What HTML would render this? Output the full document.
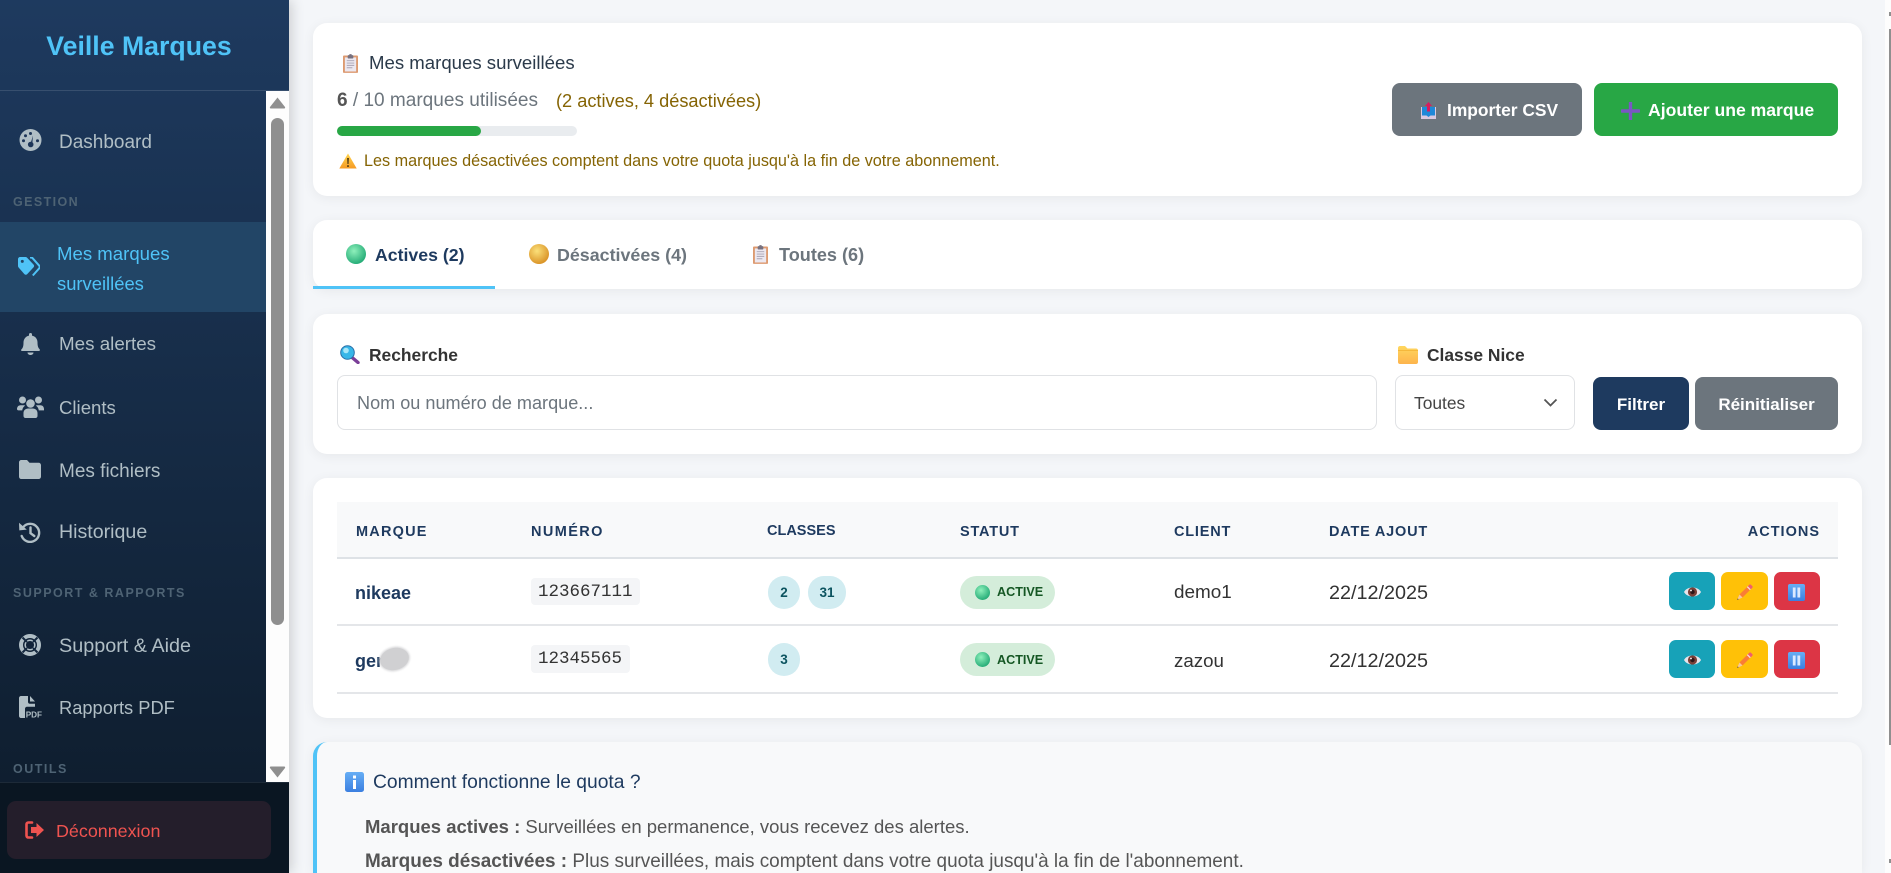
<!DOCTYPE html>
<html lang="fr"><head><meta charset="utf-8"><title>Mes marques surveillées</title>
<style>
*{box-sizing:border-box;margin:0;padding:0}
html,body{width:1891px;height:873px;overflow:hidden;background:#f4f6f9;font-family:"Liberation Sans",Arial,sans-serif}
body{position:relative}
.a,.t,svg.i{position:absolute}
.t{white-space:nowrap;line-height:24px;height:24px}
.card{position:absolute;left:313px;width:1549px;background:#fff;border-radius:14px;box-shadow:0 2px 12px rgba(0,0,0,.06)}
#side{position:absolute;left:0;top:0;width:289px;height:873px;background:linear-gradient(180deg,#1e3a5f 0%,#0d1b2a 100%);box-shadow:3px 0 12px rgba(0,0,0,.16)}
.m{color:#b0bec5;font-size:18.6px}
.s{color:#4e6374;font-size:12.5px;font-weight:700;letter-spacing:1.5px}
.btn{position:absolute;border-radius:8px}
.b{font-weight:700;color:#fff;font-size:17.4px}
.th{font-size:14.5px;font-weight:700;letter-spacing:.8px;color:#1e3a5f;top:520px}
.code{position:absolute;left:531px;height:27px;background:#f4f5f7;border-radius:4px;font:17.5px/29px "Liberation Mono",monospace;color:#333;padding-left:7px}
.bd{position:absolute;height:33px;background:#d1ecf1;color:#0c5460;border-radius:16px;font-size:13.5px;font-weight:700;line-height:33px;text-align:center}
.st{position:absolute;left:960px;width:95px;height:33px;background:#d4edda;border-radius:17px}
.ln{position:absolute;left:337px;width:1501px;height:2px;background:#e4e6e9}
.td{font-size:18.7px;color:#333}
.ab{position:absolute;width:46px;height:38px;border-radius:7px}
</style></head><body>
<svg width="0" height="0" style="position:absolute"><defs>
<radialGradient id="g1" cx=".4" cy=".35" r=".7"><stop offset="0" stop-color="#8ef0bb"/><stop offset="1" stop-color="#1fa873"/></radialGradient>
<radialGradient id="g2" cx=".4" cy=".35" r=".7"><stop offset="0" stop-color="#fbe07a"/><stop offset="1" stop-color="#d88f22"/></radialGradient>
<linearGradient id="g3" x1="0" y1="0" x2="0" y2="1"><stop offset="0" stop-color="#ffd54f"/><stop offset="1" stop-color="#f59a23"/></linearGradient>
<linearGradient id="g4" x1="0" y1="0" x2="0" y2="1"><stop offset="0" stop-color="#ffd75e"/><stop offset="1" stop-color="#fdb44d"/></linearGradient>
<linearGradient id="g5" x1="0" y1="0" x2="0" y2="1"><stop offset="0" stop-color="#66aef5"/><stop offset="1" stop-color="#3b7fe0"/></linearGradient>
<symbol id="clip" viewBox="0 0 16 20"><rect x="0" y="1.500" width="16" height="18.500" rx="1" fill="#dd9a70"/><rect x="2" y="3.500" width="12" height="15" fill="#ece8f0"/><path d="M4 7h8M4 9.500h8M4 12h8M4 14.500h6" stroke="#a9a4b4" stroke-width="1"/><rect x="5" y="1" width="6" height="3.600" rx=".8" fill="#77717f"/><rect x="6.800" y="0" width="2.400" height="2" fill="#77717f"/></symbol>
<symbol id="ball1" viewBox="0 0 20 20"><circle cx="10" cy="10" r="10" fill="url(#g1)"/></symbol>
<symbol id="ball2" viewBox="0 0 20 20"><circle cx="10" cy="10" r="10" fill="url(#g2)"/></symbol>
<symbol id="eye" viewBox="0 0 17 12"><path d="M0 6C3 0 14 0 17 6 14 12 3 12 0 6z" fill="#e9e4ea"/><circle cx="8.500" cy="6" r="4.600" fill="#7a4038"/><circle cx="8.500" cy="6" r="2.200" fill="#2d1518"/><circle cx="7" cy="4.500" r=".9" fill="#fff"/></symbol>
<symbol id="pen" viewBox="0 0 17 17"><path d="M3.500 10.500 11.800 2.200 14.800 5.200 6.500 13.500z" fill="#fa7d35"/><path d="M11.800 2.200 13.300.7c.5-.5 1.100-.5 1.600 0l1.400 1.400c.5.5.5 1.100 0 1.600L14.800 5.200z" fill="#ee5f6e"/><path d="M11.300 2.700 14.300 5.700" stroke="#f7dcdc" stroke-width="1.300"/><path d="M3.500 10.500 6.500 13.500 1 16z" fill="#f7c79c"/><path d="M1.700 14.400 1 16l1.800-.7z" fill="#5b4a3f"/></symbol>
<symbol id="pause" viewBox="0 0 17 17"><rect width="17" height="17" rx="2" fill="url(#g5)"/><rect x="4.800" y="3.500" width="2.800" height="10" fill="#dbe9ff"/><rect x="9.400" y="3.500" width="2.800" height="10" fill="#dbe9ff"/></symbol>
</defs></svg>

<!-- right page scrollbar -->
<div class="a" style="left:1885px;top:0;width:6px;height:873px;background:#fdfdfd"></div>
<div class="a" style="left:1889px;top:29px;width:2px;height:716px;background:#8f8f8f"></div>
<div class="a" style="left:1889px;top:12px;width:2px;height:4px;background:#8f8f8f"></div>
<div class="a" style="left:1889px;top:859px;width:2px;height:4px;background:#8f8f8f"></div>

<!-- card 1 -->
<div class="card" style="top:23px;height:173px"></div>
<svg class="i" style="left:343px;top:54px" width="15" height="19"><use href="#clip"/></svg>
<div class="t" style="left:369px;top:51px;font-size:18.6px;color:#2b3a4a">Mes marques surveillées</div>
<div class="t" style="left:337px;top:89px;font-size:19.05px;color:#6c757d"><b style="color:#555">6</b> / 10 marques utilisées</div>
<div class="t" style="left:556px;top:89px;font-size:18.2px;color:#856404">(2 actives, 4 désactivées)</div>
<div class="a" style="left:337px;top:126px;width:240px;height:10px;background:#e9ecef;border-radius:5px"><div style="width:144px;height:10px;background:#28a745;border-radius:5px"></div></div>
<svg class="i" style="left:339px;top:153px" width="18" height="16" viewBox="0 0 18 16"><path d="M9 .5 17.700 15.500H.3z" fill="url(#g3)"/><path d="M8.200 5h1.600l-.3 6h-1zM8.200 12.200h1.600v1.700H8.200z" fill="#3a2a10"/></svg>
<div class="t" style="left:364px;top:149px;font-size:16.2px;color:#856404">Les marques désactivées comptent dans votre quota jusqu'à la fin de votre abonnement.</div>
<div class="btn" style="left:1392px;top:83px;width:190px;height:53px;background:#6c757d"></div>
<svg class="i" style="left:1421px;top:102px" width="15" height="17" viewBox="0 0 15 17"><path d="M0 5h15v12H0z" fill="#d8c8e0"/><path d="M1 5h13v8.500H9.500L7.500 15l-2-1.500H1z" fill="#1e88d8"/><path d="M7.500 0 11 4H9v5.500H6V4H4z" fill="#d81b60"/></svg>
<div class="t b" style="left:1447px;top:98px">Importer CSV</div>
<div class="btn" style="left:1594px;top:83px;width:244px;height:53px;background:#28a745"></div>
<svg class="i" style="left:1621px;top:102px" width="19" height="18" viewBox="0 0 19 18"><path d="M9.500 1v16M1 9h17" stroke="#7a56c4" stroke-width="3.400" stroke-linecap="round"/></svg>
<div class="t b" style="left:1648px;top:98px;font-size:17.6px">Ajouter une marque</div>

<!-- tabs -->
<div class="card" style="top:220px;height:69px"><div class="a" style="left:0;top:66px;width:182px;height:3px;background:#4fc3f7"></div></div>
<svg class="i" style="left:346px;top:244px" width="20" height="20"><use href="#ball1"/></svg>
<div class="t" style="left:375px;top:243px;font-size:17.7px;font-weight:700;color:#1e3a5f">Actives (2)</div>
<svg class="i" style="left:529px;top:244px" width="20" height="20"><use href="#ball2"/></svg>
<div class="t" style="left:557px;top:243px;font-size:17.85px;font-weight:700;color:#6c757d">Désactivées (4)</div>
<svg class="i" style="left:753px;top:245px" width="15" height="19"><use href="#clip"/></svg>
<div class="t" style="left:779px;top:243px;font-size:18.1px;font-weight:700;color:#6c757d">Toutes (6)</div>

<!-- filters -->
<div class="card" style="top:314px;height:140px"></div>
<svg class="i" style="left:340px;top:345px" width="20" height="19" viewBox="0 0 20 19"><path d="M11.500 12 18 17.500" stroke="#7b3f98" stroke-width="3.400" stroke-linecap="round"/><circle cx="7.500" cy="7.500" r="6.800" fill="#38b6e8" stroke="#2a6fa8" stroke-width="1"/><circle cx="6" cy="5.500" r="2.800" fill="#a8e6f8"/></svg>
<div class="t" style="left:369px;top:343px;font-size:17.4px;font-weight:700;color:#333">Recherche</div>
<div class="a" style="left:337px;top:375px;width:1040px;height:55px;border:1px solid #e0e2e5;border-radius:8px;background:#fff"></div>
<div class="t" style="left:357px;top:391px;font-size:18.1px;color:#6c757d">Nom ou numéro de marque...</div>
<svg class="i" style="left:1398px;top:346px" width="20" height="18" viewBox="0 0 20 18"><path d="M0 2c0-1 .7-2 2-2h5l2.500 2.500H18c1.200 0 2 .8 2 2V16c0 1.200-.8 2-2 2H2c-1.200 0-2-.8-2-2z" fill="url(#g4)"/><path d="M0 4.500h20" stroke="#f5b83c" stroke-width="1"/></svg>
<div class="t" style="left:1427px;top:343px;font-size:17.4px;font-weight:700;color:#333">Classe Nice</div>
<div class="a" style="left:1395px;top:375px;width:180px;height:55px;border:1px solid #e0e2e5;border-radius:8px;background:#fff"></div>
<div class="t" style="left:1414px;top:391px;font-size:17.4px;color:#444">Toutes</div>
<svg class="i" style="left:1543px;top:398px" width="15" height="9" viewBox="0 0 15 9"><path d="M1.500 1.500 7.500 7.500 13.500 1.500" fill="none" stroke="#555" stroke-width="1.800"/></svg>
<div class="btn" style="left:1593px;top:377px;width:96px;height:53px;background:#1e3a5f"></div>
<div class="t b" style="left:1593px;width:96px;text-align:center;top:393px;font-size:17px">Filtrer</div>
<div class="btn" style="left:1695px;top:377px;width:143px;height:53px;background:#6c757d"></div>
<div class="t b" style="left:1695px;width:143px;text-align:center;top:393px;font-size:17px">Réinitialiser</div>

<!-- table -->
<div class="card" style="top:478px;height:240px"></div>
<div class="a" style="left:337px;top:502px;width:1501px;height:56px;background:#f8f9fa"></div>
<div class="ln" style="top:557px;background:#dee2e6"></div>
<div class="ln" style="top:624px"></div>
<div class="ln" style="top:692px"></div>
<div class="t th" style="left:356px;letter-spacing:1.2px">MARQUE</div>
<div class="t th" style="left:531px;letter-spacing:1.4px">NUMÉRO</div>
<div class="t th" style="left:767px;top:519px;letter-spacing:0">CLASSES</div>
<div class="t th" style="left:960px">STATUT</div>
<div class="t th" style="left:1174px">CLIENT</div>
<div class="t th" style="left:1329px">DATE AJOUT</div>
<div class="t th" style="right:71px;letter-spacing:1px">ACTIONS</div>

<div class="t" style="left:355px;top:581px;font-size:18px;font-weight:700;color:#1e3a5f">nikeae</div>
<div class="t" style="left:355px;top:649px;font-size:18px;font-weight:700;color:#1e3a5f">gen</div>
<div class="a" style="left:380px;top:648px;width:29px;height:22px;border-radius:50%;background:#d0d0d2;box-shadow:0 0 2px 1px #d6d6d8;transform:rotate(-14deg)"></div>
<div class="code" style="top:578px;width:109px">123667111</div>
<div class="code" style="top:645px;width:99px;height:28px">12345565</div>
<div class="bd" style="left:768px;top:576px;width:32px">2</div>
<div class="bd" style="left:808px;top:576px;width:38px">31</div>
<div class="bd" style="left:768px;top:643px;width:32px">3</div>
<div class="st" style="top:576px"></div><div class="st" style="top:643px"></div>
<svg class="i" style="left:975px;top:585px" width="15" height="15"><use href="#ball1"/></svg>
<svg class="i" style="left:975px;top:652px" width="15" height="15"><use href="#ball1"/></svg>
<div class="t" style="left:997px;top:580px;font-size:12.6px;font-weight:700;color:#155724">ACTIVE</div>
<div class="t" style="left:997px;top:648px;font-size:12.6px;font-weight:700;color:#155724">ACTIVE</div>
<div class="t td" style="left:1174px;top:581px;font-size:18.9px">demo1</div>
<div class="t td" style="left:1174px;top:649px">zazou</div>
<div class="t td" style="left:1329px;top:581px;font-size:19.8px">22/12/2025</div>
<div class="t td" style="left:1329px;top:649px;font-size:19.8px">22/12/2025</div>

<div class="ab" style="left:1669px;top:572px;background:#17a2b8"></div>
<div class="ab" style="left:1721px;top:572px;width:47px;background:#ffc107"></div>
<div class="ab" style="left:1774px;top:572px;background:#dc3545"></div>
<div class="ab" style="left:1669px;top:640px;background:#17a2b8"></div>
<div class="ab" style="left:1721px;top:640px;width:47px;background:#ffc107"></div>
<div class="ab" style="left:1774px;top:640px;background:#dc3545"></div>
<svg class="i" style="left:1684px;top:586px" width="17" height="12"><use href="#eye"/></svg>
<svg class="i" style="left:1736px;top:584px" width="17" height="17"><use href="#pen"/></svg>
<svg class="i" style="left:1788px;top:584px" width="17" height="17"><use href="#pause"/></svg>
<svg class="i" style="left:1684px;top:654px" width="17" height="12"><use href="#eye"/></svg>
<svg class="i" style="left:1736px;top:652px" width="17" height="17"><use href="#pen"/></svg>
<svg class="i" style="left:1788px;top:652px" width="17" height="17"><use href="#pause"/></svg>

<!-- info -->
<div class="card" style="top:742px;height:131px;background:#f8f9fa;border-left:4px solid #4fc3f7;border-radius:14px 14px 0 0"></div>
<svg class="i" style="left:345px;top:772px" width="19" height="20" viewBox="0 0 19 20"><rect width="19" height="20" rx="2.500" fill="url(#g5)"/><rect x="8" y="3.500" width="3" height="3" fill="#fff"/><rect x="8" y="8" width="3" height="9" fill="#fff"/></svg>
<div class="t" style="left:373px;top:771px;font-size:19.25px;color:#1e3a5f">Comment fonctionne le quota ?</div>
<div class="t" style="left:365px;top:815px;font-size:18.5px;color:#555"><b>Marques actives :</b> Surveillées en permanence, vous recevez des alertes.</div>
<div class="t" style="left:365px;top:850px;font-size:18.95px;color:#555"><b>Marques désactivées :</b> Plus surveillées, mais comptent dans votre quota jusqu'à la fin de l'abonnement.</div>

<!-- sidebar -->
<div id="side">
<div class="a" style="left:0;top:90px;width:289px;height:1px;background:rgba(255,255,255,.12)"></div>
<div class="t" style="left:0;width:278px;text-align:center;top:34px;font-size:26.7px;font-weight:700;color:#4fc3f7">Veille Marques</div>
<div class="a" style="left:0;top:222px;width:266px;height:90px;background:#224566"></div>

<svg class="i" style="left:19px;top:129px" width="23" height="22" viewBox="0 0 23 22"><circle cx="11.500" cy="11" r="11" fill="#b0bec5"/><path d="M10.500 18 14 6.500 13 18z" fill="#1e3658"/><circle cx="11.700" cy="15.500" r="2.800" fill="#1e3658"/><circle cx="11.500" cy="4.500" r="1.500" fill="#1e3658"/><circle cx="6.500" cy="6.800" r="1.500" fill="#1e3658"/><circle cx="4.500" cy="11.800" r="1.500" fill="#1e3658"/><circle cx="18.500" cy="11.800" r="1.500" fill="#1e3658"/></svg>
<div class="t m" style="left:59px;top:131px;font-size:19px">Dashboard</div>
<div class="t s" style="left:13px;top:190px;letter-spacing:1.4px">GESTION</div>

<svg class="i" style="left:18px;top:257px" width="22" height="20" viewBox="0 0 22 20"><path d="M0 2c0-1 1-2 2-2h5.500c.6 0 1.100.2 1.500.6l6.600 7c.7.7.7 1.900 0 2.600l-6.500 7c-.7.700-1.900.700-2.600 0L.6 10.500C.2 10 0 9.500 0 9z" fill="#4fc3f7"/><circle cx="4.300" cy="4.400" r="1.500" fill="#224566"/><path d="M12 .5h1c.7 0 1.100.2 1.500.6l6.500 7.300c.9 1 .9 2.300 0 3.200l-6.200 6.900" fill="none" stroke="#4fc3f7" stroke-width="2"/></svg>
<div class="t" style="left:57px;top:242px;font-size:18.6px;color:#4fc3f7">Mes marques</div>
<div class="t" style="left:57px;top:272px;font-size:18.4px;color:#4fc3f7">surveillées</div>

<svg class="i" style="left:21px;top:333px" width="19" height="22" viewBox="0 0 19 22"><path d="M8 1.500a1.500 1.500 0 0 1 3 0V2.600c3.400.7 5.500 3.400 5.500 6.800 0 4.600 1.100 5.800 2.100 6.800.5.500.4 1.800-.7 1.800H1.100C0 18.200-.1 16.900.4 16.400c1-1 2.100-2.200 2.100-6.800 0-3.400 2.100-6.300 5.500-7z" fill="#b0bec5"/><path d="M6.500 19.500h6c0 1.400-1.300 2.500-3 2.500s-3-1.100-3-2.500z" fill="#b0bec5"/></svg>
<div class="t m" style="left:59px;top:332px;font-size:18.8px">Mes alertes</div>

<svg class="i" style="left:17px;top:396px" width="27" height="22" viewBox="0 0 27 22"><g fill="#b0bec5"><circle cx="5.500" cy="4" r="3.500"/><circle cx="21.500" cy="4" r="3.500"/><circle cx="13.500" cy="7.500" r="4.300"/><path d="M0 13c0-2 1.300-3.800 3.500-3.800h3.300c.5 0 1 .2 1.400.4-1.700 1.100-2.800 2.800-3 4.800H1.500C.6 14.400 0 13.800 0 13zM27 13c0-2-1.300-3.800-3.500-3.800h-3.300c-.5 0-1 .2-1.400.4 1.700 1.100 2.800 2.800 3 4.800h4.700c.9 0 1.500-.6 1.500-1.400zM6.500 17c0-2.600 2.100-4.500 4.600-4.500h4.800c2.500 0 4.600 1.900 4.600 4.500v3c0 1-.8 2-2 2H8.500c-1.200 0-2-1-2-2z"/></g></svg>
<div class="t m" style="left:59px;top:396px">Clients</div>

<svg class="i" style="left:19px;top:460px" width="22" height="19" viewBox="0 0 22 19"><path d="M0 2.500C0 1 1 0 2.500 0H8l2.500 2.700h9c1.400 0 2.500 1 2.500 2.500v11.300c0 1.500-1.100 2.500-2.500 2.500h-17C1 19 0 18 0 16.500z" fill="#b0bec5"/></svg>
<div class="t m" style="left:59px;top:460px;font-size:19px">Mes fichiers</div>

<svg class="i" style="left:19px;top:522px" width="22" height="21" viewBox="0 0 22 21"><path d="M4.300 5a9 9 0 1 1-1.600 9" fill="none" stroke="#b0bec5" stroke-width="2.400" stroke-linecap="round"/><path d="M0 0.800 7.800 7.600 0.300 8.400z" fill="#b0bec5"/><path d="M11.500 5.500v5.700l3.800 2.800" fill="none" stroke="#b0bec5" stroke-width="2.400" stroke-linecap="round"/></svg>
<div class="t m" style="left:59px;top:520px;font-size:19.6px">Historique</div>

<div class="t s" style="left:13px;top:581px">SUPPORT &amp; RAPPORTS</div>

<svg class="i" style="left:19px;top:634px" width="22" height="22" viewBox="0 0 22 22"><circle cx="11" cy="11" r="9" fill="none" stroke="#b0bec5" stroke-width="4"/><circle cx="11" cy="11" r="4.800" fill="none" stroke="#b0bec5" stroke-width="1.500"/><path d="M3.500 3.500l4.500 4.500M18.500 3.500 14 8M3.500 18.500 8 14M18.500 18.500 14 14" stroke="#14283f" stroke-width="2"/></svg>
<div class="t m" style="left:59px;top:634px;font-size:19.8px">Support &amp; Aide</div>

<svg class="i" style="left:19px;top:696px" width="23" height="22" viewBox="0 0 23 22"><path d="M0 2C0 .9.900 0 2 0h7v6c0 1 .8 1.700 1.700 1.700H16v3H8c-1.200 0-2 .9-2 2V22H2c-1.100 0-2-.9-2-2z" fill="#b0bec5"/><path d="M11 0l5 5.500h-5z" fill="#b0bec5"/><text x="6.700" y="21.500" font-family="Liberation Sans,sans-serif" font-size="8.200" font-weight="700" fill="#b0bec5">PDF</text></svg>
<div class="t m" style="left:59px;top:696px;font-size:18.3px">Rapports PDF</div>

<div class="t s" style="left:13px;top:757px">OUTILS</div>

<!-- sidebar scrollbar -->
<div class="a" style="left:266px;top:91px;width:23px;height:691px;background:#fdfdfd"></div>
<svg class="i" style="left:269px;top:97px" width="17" height="12" viewBox="0 0 17 12"><path d="M8.500 .5 16 10c.4.700 0 1.500-.8 1.500H1.800C1 11.500.6 10.700 1 10z" fill="#8f8f8f"/></svg>
<div class="a" style="left:271px;top:118px;width:13px;height:507px;background:#8f8f8f;border-radius:6.500px"></div>
<svg class="i" style="left:269px;top:766px" width="17" height="12" viewBox="0 0 17 12"><path d="M8.500 11.500 16 2c.4-.7 0-1.500-.8-1.500H1.800C1 .5.600 1.300 1 2z" fill="#8f8f8f"/></svg>

<!-- footer -->
<div class="a" style="left:0;top:782px;width:289px;height:91px;background:#0a1622;border-top:1px solid #1d2a38"></div>
<div class="a" style="left:7px;top:801px;width:264px;height:58px;background:#241e2b;border-radius:9px"></div>
<svg class="i" style="left:25px;top:821px" width="19" height="18" viewBox="0 0 19 18"><path d="M7 1.500H3.500C2 1.500 1.500 2.500 1.500 3.500v11c0 1 .5 2 2 2H7" fill="none" stroke="#ef5350" stroke-width="2.600" stroke-linecap="round"/><path d="M11.500 2 19 9l-7.500 7v-4H6V6h5.500z" fill="#ef5350"/></svg>
<div class="t" style="left:56px;top:819px;font-size:17.9px;color:#ef5350">Déconnexion</div>
</div>
</body></html>
